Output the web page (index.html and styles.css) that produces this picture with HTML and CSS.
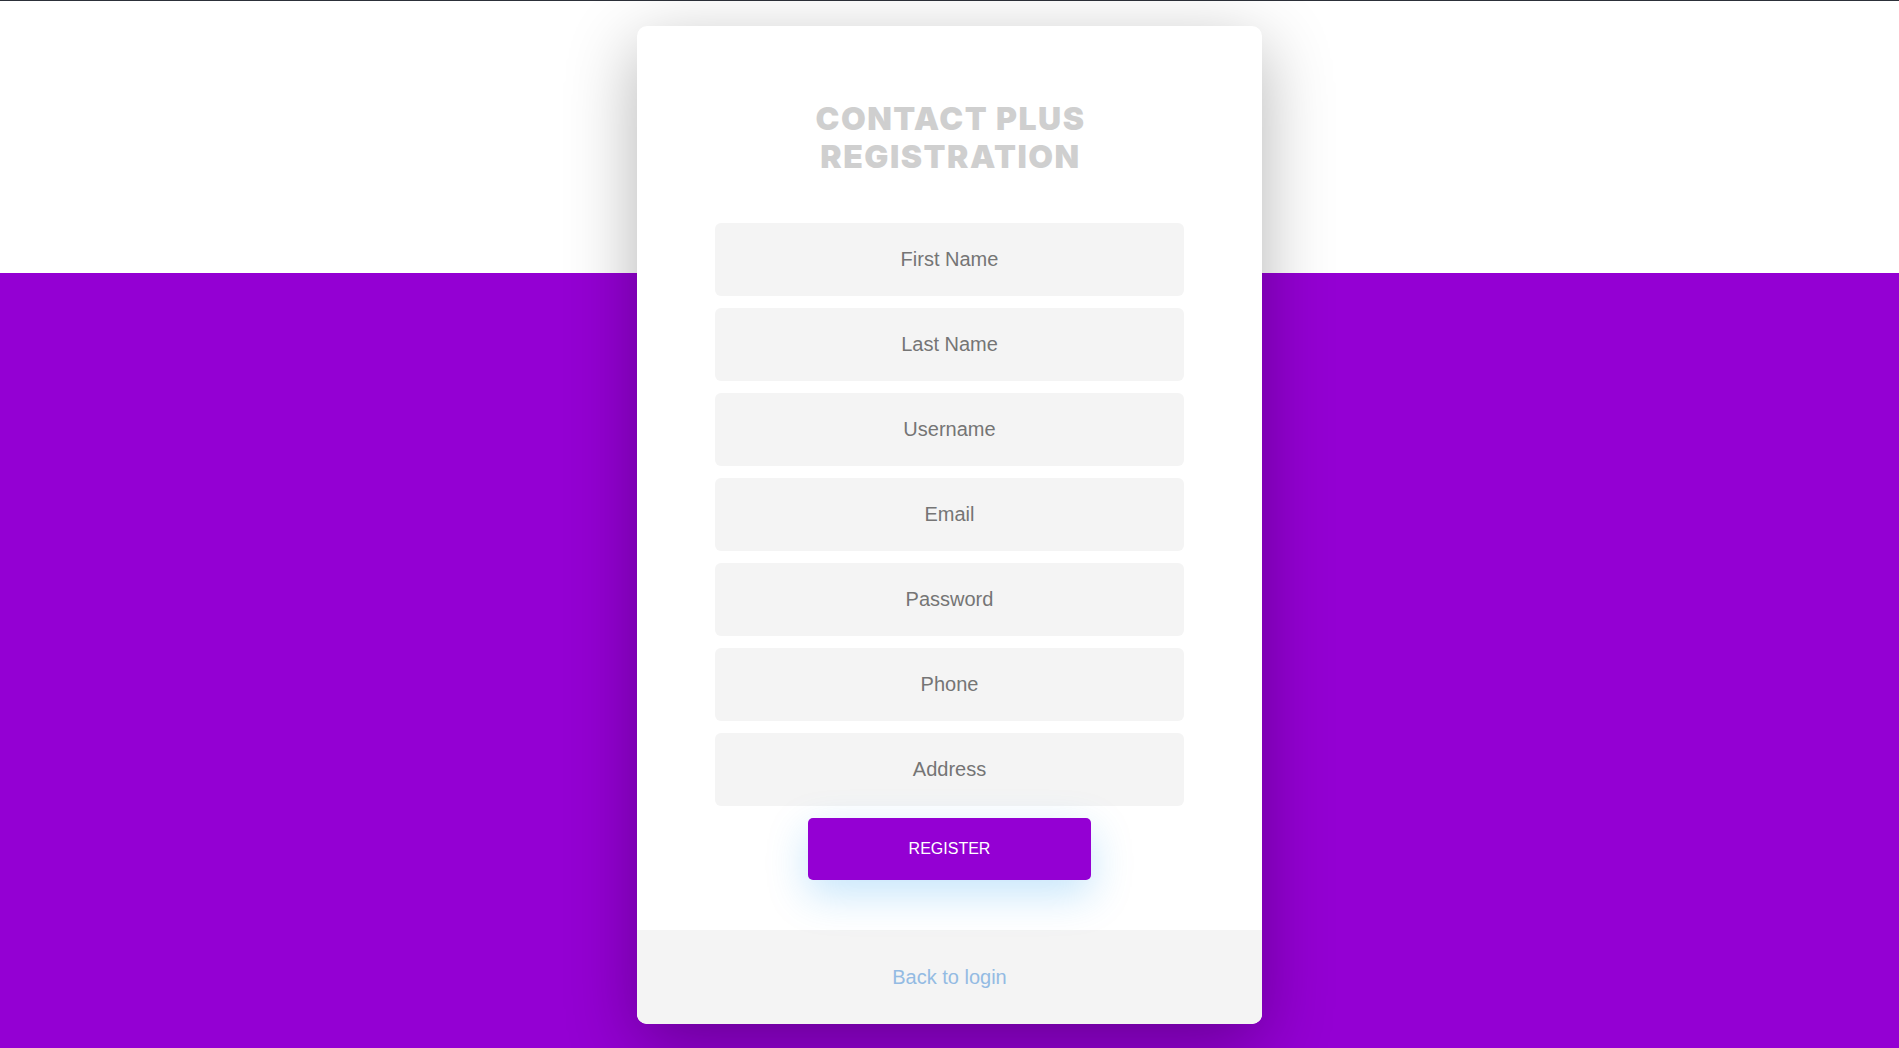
FILE: index.html
```html
<!DOCTYPE html>
<html lang="en">
<head>
<meta charset="utf-8">
<title>Contact Plus Registration</title>
<link rel="stylesheet" href="styles.css">
</head>
<body>
<div class="page">
  <div class="card">
    <div class="card-body">
      <h1 class="title">CONTACT PLUS<br>REGISTRATION</h1>
      <form class="form">
        <input class="field" type="text" placeholder="First Name">
        <input class="field" type="text" placeholder="Last Name">
        <input class="field" type="text" placeholder="Username">
        <input class="field" type="email" placeholder="Email">
        <input class="field" type="password" placeholder="Password">
        <input class="field" type="text" placeholder="Phone">
        <input class="field" type="text" placeholder="Address">
        <button class="btn" type="button">REGISTER</button>
      </form>
    </div>
    <div class="card-footer">
      <a class="link" href="#">Back to login</a>
    </div>
  </div>
</div>
</body>
</html>
```

FILE: styles.css
```css
html, body {
  margin: 0;
  padding: 0;
  overflow: hidden;
}

.page {
  box-sizing: border-box;
  height: 1048px;
  border-top: 1px solid #2c3039;
  padding-top: 25px;
  background: linear-gradient(to bottom, #ffffff 0, #ffffff 272px, #9400d3 272px, #9400d3 100%);
  font-family: "Liberation Sans", Arial, sans-serif;
}

.card {
  width: 625px;
  margin: 0 auto;
  background: #ffffff;
  border-radius: 10px;
  overflow: hidden;
  box-shadow: 0 20px 70px rgba(0, 0, 0, 0.3);
}

.card-body {
  padding: 74px 0 50px;
}

.title {
  margin: 0 0 47px;
  padding-left: 2px;
  text-align: center;
  font-family: Inter, "Liberation Sans", sans-serif;
  font-weight: 900;
  font-size: 32px;
  line-height: 38px;
  letter-spacing: 1.5px;
  color: #cfcfcf;
}

.form {
  width: 75%;
  margin: 0 auto;
  display: flex;
  flex-direction: column;
  gap: 12.5px;
}

.field {
  box-sizing: border-box;
  width: 100%;
  height: 72.5px;
  margin: 0;
  border: none;
  border-radius: 6px;
  background: #f4f4f4;
  outline: none;
  text-align: center;
  font-family: "Liberation Sans", Arial, sans-serif;
  font-size: 20px;
  color: #333;
}

.field::placeholder {
  color: #757575;
  opacity: 1;
}

.btn {
  align-self: center;
  width: 283px;
  height: 62px;
  border: none;
  border-radius: 5px;
  background: #9400d3;
  color: #ffffff;
  font-family: "Liberation Sans", Arial, sans-serif;
  font-size: 16px;
  cursor: pointer;
  box-shadow: 0 14px 40px rgba(25, 150, 240, 0.25);
}

.card-footer {
  height: 94px;
  background: #f4f4f4;
  display: flex;
  align-items: center;
  justify-content: center;
}

.link {
  font-size: 20px;
  color: #93bbe3;
  text-decoration: none;
}
```
